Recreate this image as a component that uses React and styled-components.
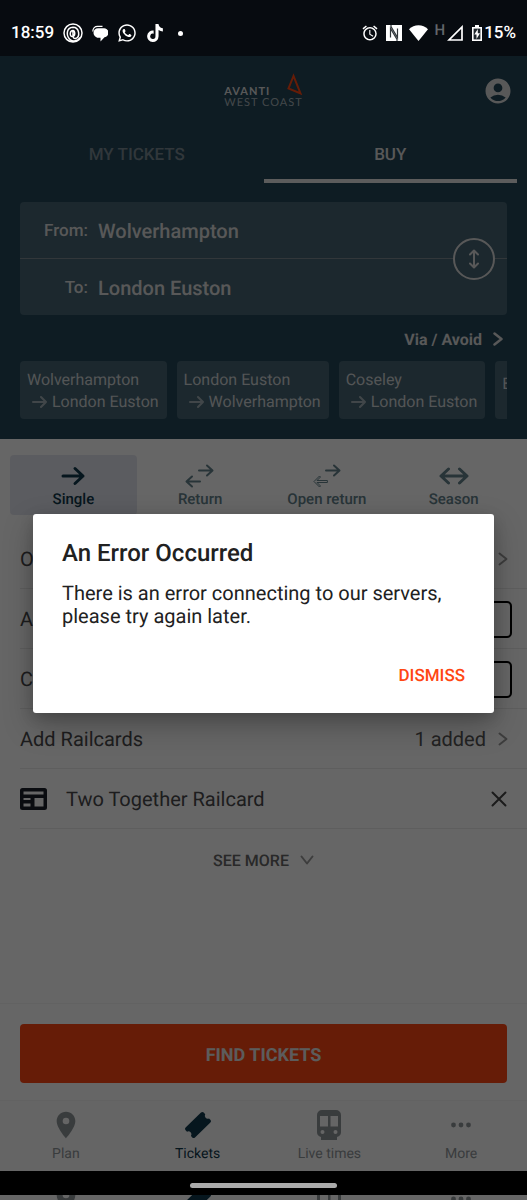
import styled, { createGlobalStyle, css } from "styled-components"
import { FaTiktok, FaWhatsapp } from "react-icons/fa"
import { MdAccountCircle, MdAlarm, MdLocationOn } from "react-icons/md"

const GlobalStyle = createGlobalStyle`
    * {
        box-sizing: border-box;
    }
    body {
        margin: 0;
        font-family: Roboto, "Liberation Sans", sans-serif;
        text-rendering: geometricPrecision;
        background-color: #666;
    }
    button, input {
        font-family: inherit;
        text-rendering: inherit;
    }
    svg {
        display: block;
        flex-shrink: 0;
    }
`

const Page = styled.div`
    position: relative;
    min-height: 100vh;
    display: flex;
    flex-direction: column;
    background-color: #fff;
`

/* status bar */
const StatusBar = styled.div`
    position: relative;
    z-index: 2;
    height: 56px;
    padding: 10px 11px 0;
    display: flex;
    align-items: center;
    justify-content: space-between;
    background-color: #070b10;
    color: #fff;
    font-size: 17px;
    font-weight: 500;
`
const StatusGroup = styled.div`
    display: flex;
    align-items: center;
    gap: ${props => props.$gap}px;
`
const Dot = styled.span`
    width: 5px;
    height: 5px;
    margin-left: 5px;
    border-radius: 50%;
    background-color: #fff;
`
const Network = styled.span`
    align-self: flex-start;
    margin-top: -2px;
    font-size: 15px;
    line-height: 14px;
    color: #62666a;
`
const Signal = styled.div`
    display: flex;
    align-items: center;
    gap: 2px;
`
const Battery = styled.div`
    display: flex;
    align-items: center;
    gap: 2px;
    margin-left: 2px;
`

/* header */
const Header = styled.header`
    background-color: #234658;
    color: #fff;
    padding-bottom: 20px;
`
const Brand = styled.div`
    height: 69px;
    padding: 0 14px;
    display: grid;
    grid-template-columns: 1fr auto 1fr;
    align-items: center;
`
const Logo = styled.div`
    grid-column: 2;
    font-family: Lato, "Liberation Sans", sans-serif;
    font-size: 11px;
    line-height: 11px;
    letter-spacing: 1px;
    color: #ddd;
`
const LogoTop = styled.div`
    display: flex;
    justify-content: space-between;
    align-items: flex-end;
    font-weight: 700;
`
const LogoBottom = styled.div`
    font-weight: 400;
    color: #a9b4ba;
`
const Account = styled.button`
    justify-self: end;
    padding: 0;
    border: 0;
    background: none;
    color: #ddd;
    font-size: 30px;
`
const Tabs = styled.nav`
    display: flex;
    padding: 0 10px;
`
const Tab = styled.button`
    flex: 1;
    height: 58px;
    padding: 6px 0 0;
    border: 0;
    border-bottom: 4px solid ${props => props.$active ? "#e6e6e6" : "transparent"};
    background: none;
    color: ${props => props.$active ? "#dcdcdc" : "#7a8a93"};
    font-size: 17px;
    font-weight: 500;
`
const Journey = styled.div`
    position: relative;
    margin: 19px 20px 0;
    border-radius: 4px;
    background-color: #466473;
`
const Station = styled.div`
    height: 56px;
    padding-top: 2px;
    display: flex;
    align-items: center;
    gap: 10px;
    font-size: 20px;
    font-weight: 500;
    color: #dcdcdc;
    & + & {
        height: 57px;
        border-top: 1px solid #7d8a91;
    }
`
const StationLabel = styled.span`
    width: 68px;
    text-align: right;
    font-size: 17px;
`
const Swap = styled.button`
    position: absolute;
    right: 12px;
    top: 50%;
    width: 42px;
    height: 42px;
    margin-top: -21px;
    padding: 0;
    display: flex;
    align-items: center;
    justify-content: center;
    border: 2px solid #dcdcdc;
    border-radius: 50%;
    background-color: #466473;
    color: #dcdcdc;
`
const Via = styled.a`
    height: 46px;
    padding: 2px 24px 0;
    display: flex;
    align-items: center;
    justify-content: flex-end;
    gap: 11px;
    color: #dcdcdc;
    font-size: 16px;
    font-weight: 700;
    text-decoration: none;
`
const Recents = styled.div`
    display: flex;
    gap: 10px;
    margin: 0 20px;
    overflow: hidden;
`
const Recent = styled.button`
    flex-shrink: 0;
    height: 58px;
    padding: 1px 8px 0 7px;
    border: 0;
    border-radius: 4px;
    background-color: #466473;
    color: #d0d4d6;
    font-size: 16px;
    line-height: 22px;
    text-align: left;
`
const RecentTo = styled.span`
    display: flex;
    align-items: center;
    gap: 5px;
    padding-left: 5px;
    svg {
        color: #a4b0b6;
    }
`

/* search form */
const Kinds = styled.div`
    display: flex;
    padding: 16px 10px 14px;
`
const Kind = styled.button`
    flex: 1;
    height: 60px;
    padding: 7px 0 0;
    display: flex;
    flex-direction: column;
    align-items: center;
    justify-content: flex-start;
    border: 0;
    border-radius: 4px;
    background: ${props => props.$active ? "#e4e7ef" : "none"};
    color: ${props => props.$active ? "#10384c" : "#64828c"};
    font-size: 15px;
    font-weight: 500;
    line-height: 18px;
`
const row = css`
    height: 60px;
    margin-left: 20px;
    padding-right: 19px;
    display: flex;
    align-items: center;
    border-bottom: 1px solid #ebebeb;
    font-size: 20px;
    color: #4a4a4c;
`
const Row = styled.div`
    ${row}
    padding-top: 1px;
    ${props => props.$boxed && "padding-right: 15px;"}
`
const RowLink = styled.a`
    ${row}
    padding-top: 1px;
    text-decoration: none;
`
const RowLabel = styled.label`
    flex: 1;
`
const RowText = styled.span`
    flex: 1;
`
const Added = styled.span`
    margin-right: 12px;
    color: #555;
`
const Chevron = styled.span`
    color: #999;
`
const Count = styled.input`
    width: 52px;
    height: 37px;
    padding: 0 8px;
    border: 2px solid #000;
    border-radius: 5px;
    background: none;
    font-size: 20px;
`
const Railcard = styled.span`
    flex: 1;
    margin-left: 19px;
`
const Remove = styled.button`
    padding: 0;
    border: 0;
    background: none;
    color: #444;
`
const SeeMore = styled.button`
    width: 100%;
    height: 62px;
    padding: 0;
    display: flex;
    align-items: center;
    justify-content: center;
    gap: 11px;
    border: 0;
    background: none;
    color: #666;
    font-size: 16px;
    font-weight: 500;
    svg {
        color: #999;
    }
`
const Content = styled.main`
    flex: 1;
`
const Action = styled.div`
    padding: 20px 20px 17px;
    border-top: 1px solid #f4f4f4;
`
const Find = styled.button`
    width: 100%;
    height: 59px;
    padding: 3px 0 0;
    border: 0;
    border-radius: 4px;
    background-color: #ff4713;
    color: #e6e6e6;
    font-size: 18px;
    font-weight: 700;
`

/* bottom bar */
const BottomNav = styled.nav`
    display: flex;
    height: 71px;
    border-top: 1px solid #f6f6f6;
    background-color: #fcfcfc;
`
const NavItem = styled.a`
    flex: 1;
    display: flex;
    flex-direction: column;
    align-items: center;
    padding: 8px 0 0;
    color: ${props => props.$active ? "#10384c" : "#90969a"};
    font-size: 14px;
    line-height: 26px;
    text-decoration: none;
`
const NavIcon = styled.span`
    height: 32px;
    display: flex;
    align-items: center;
`
const SystemBar = styled.div`
    position: relative;
    z-index: 2;
    height: 24px;
    padding-top: 5px;
    display: flex;
    align-items: center;
    justify-content: center;
    background-color: #000;
`
const Pill = styled.div`
    width: 28%;
    height: 5px;
    border-radius: 3px;
    background-color: #aaa;
`
const Underlay = styled.div`
    height: 5px;
    overflow: hidden;
    display: flex;
    align-items: flex-start;
`
const UnderlayIcon = styled.span`
    flex: 1;
    display: flex;
    justify-content: center;
    height: 32px;
    align-items: center;
    margin-top: -12px;
    color: ${props => props.$active ? "#10384c" : "#90969a"};
`

/* dialog */
const Backdrop = styled.div`
    position: absolute;
    inset: 0;
    z-index: 1;
    padding: 56px 33px 29px;
    display: flex;
    align-items: center;
    background-color: rgba(0, 0, 0, 0.6);
`
const Dialog = styled.div`
    flex: 1;
    padding: 25px 29px 22px;
    border-radius: 3px;
    background-color: #fff;
    color: #212121;
    box-shadow: 0 12px 30px rgba(0, 0, 0, 0.25), 0 4px 14px rgba(0, 0, 0, 0.15);
`
const DialogTitle = styled.h2`
    margin: 0 0 14px;
    font-size: 24px;
    line-height: 29px;
    font-weight: 500;
`
const DialogText = styled.p`
    margin: 0 0 33px;
    font-size: 20px;
    line-height: 23px;
`
const DialogActions = styled.div`
    display: flex;
    justify-content: flex-end;
`
const Dismiss = styled.button`
    padding: 5px 0;
    border: 0;
    background: none;
    color: #ff4713;
    font-size: 17px;
    line-height: 20px;
    font-weight: 500;
`

const Stroke = ({ w, h, width = 2, d, children }) => (
    <svg width={w} height={h} viewBox={`0 0 ${w} ${h}`} fill="none" stroke="currentColor" strokeWidth={width} strokeLinecap="round" strokeLinejoin="round">
        <path d={d} />
        {children}
    </svg>
)

const ThreadsIcon = () => (
    <Stroke w={20} h={20} width={1.5} d="M10 1a9 9 0 1 0 0 18a9 9 0 1 0 0-18M7 16.500C3 13 3 4.500 10 4.200c6.500 0 7.500 10 2.500 11.300-3 .5-2.500-3-2.500-8M10 7.500c-3.500 0-3.500 6-.8 6 3.500 0 3-6 .8-6M7 16.500c3 2.500 8 1.500 9.500-1.500" />
)

const ChatIcon = () => (
    <svg width="16" height="17" viewBox="0 0 16 17" fill="currentColor">
        <path d="M6 3.200h5.500a4.500 4.500 0 0 1 1 9L8.500 16.500v-3.700H6C4 12.500 1.500 10.500 1.500 7.700a4.500 4.500 0 0 1 4.500-4.500z" />
        <path d="M.8 6.500C.8 3 3 1.300 5.500 1.300h5" fill="none" stroke="currentColor" strokeWidth="1.200" />
    </svg>
)

const NfcIcon = () => (
    <svg width="16" height="16" viewBox="0 0 16 16">
        <path d="M0 0h16v16H0z" fill="#fff" />
        <path d="M5 0v1.500l6.500 11V3.500M11 16v-1.500L4.500 3.500v9" fill="none" stroke="#30363a" strokeWidth="1.200" />
    </svg>
)

const WifiIcon = () => (
    <svg width="19" height="16" viewBox="0 0 19 16" fill="currentColor">
        <path d="M9.500 16L0 4.300C5-1.200 14-1.200 19 4.300z" />
    </svg>
)

const SignalIcon = () => (
    <svg width="16" height="16" viewBox="0 0 16 16" fill="none" stroke="currentColor" strokeWidth="1.700">
        <path d="M15 2v13H2z" />
    </svg>
)

const BatteryIcon = () => (
    <svg width="10" height="16" viewBox="0 0 10 16">
        <path d="M3 0h4v2h3v14H0V2h3z" fill="#fff" />
        <path d="M1.600 3.600h6.800v10.800H1.600z" fill="#20272c" />
        <path d="M5.800 4L2.300 9.500h2.200V14L8 8.300H5.800z" fill="#fff" />
    </svg>
)

const LogoMark = () => (
    <svg width="16" height="24" viewBox="0 0 16 24" fill="none" stroke="#ff4713" strokeWidth="2">
        <path d="M6.500 3L1.500 15.500L13.500 20.500z" />
    </svg>
)

const SingleIcon = () => <Stroke w={30} h={28} width={3} d="M5 14h20M17 6.500l8 7.500-8 7.500" />
const ReturnIcon = () => <Stroke w={30} h={28} d="M14 8.500h13M22 3.500l5.500 5-5.500 5M15 19.500H2M7 14.500l-5.500 5 5.500 5" />
const OpenReturnIcon = () => (
    <Stroke w={30} h={28} d="M14 8.500h13M22 3.500l5.500 5-5.500 5">
        <path d="M15 18.500H5l3.500-3.500-1-1L2 19.500l5.500 5.500 1-1L5 20.500h10z" strokeWidth="1" />
    </Stroke>
)
const SeasonIcon = () => <Stroke w={30} h={28} width={3} d="M2.500 14h25M9.500 7l-7.500 7 7.500 7M20.500 7l7.500 7-7.500 7" />
const ArrowIcon = () => <Stroke w={15} h={14} width={2} d="M1 7h13M9 2l5 5-5 5" />
const ChevronRight = ({ width }) => <Stroke w={10} h={14} width={width} d="M1.500 1.500l7 5.500-7 5.500" />

const RailcardIcon = () => (
    <svg width="27" height="22" viewBox="0 0 27 22">
        <path d="M2.500 0h22A2.500 2.500 0 0 1 27 2.500v17a2.500 2.500 0 0 1-2.500 2.500h-22A2.500 2.500 0 0 1 0 19.500v-17A2.500 2.500 0 0 1 2.500 0zM3.500 3.500v3h20v-3zM3.500 10v2h7v-2zM3.500 15.500v3h7v-3zM14.500 10v8.500h9V10z" fill="#1b1f28" fillRule="evenodd" />
    </svg>
)

const TicketIcon = () => (
    <svg width="28" height="28" viewBox="0 0 28 28" fill="currentColor">
        <path d="M17 1.500q1.500-1.200 2.700.1l1.500 1.600a3 3 0 0 0 3.800 4.200l1.600 1.500q1 1.300-.2 2.600L11 26.500q-1.500 1.200-2.700-.1L7 25a3 3 0 0 0-4-4.200L1.400 19q-1-1.300.2-2.600z" />
    </svg>
)

const TrainIcon = () => (
    <svg width="24" height="30" viewBox="0 0 24 30" fill="currentColor">
        <path d="M5 0h14a5 5 0 0 1 5 5v17a5 5 0 0 1-4 5v3H4v-3a5 5 0 0 1-4-5V5a5 5 0 0 1 5-5zM3 6v10.500h8V6zM13.500 6v10.500H21V6zM5.500 20a2 2 0 1 0 0 4 2 2 0 0 0 0-4zM18.500 20a2 2 0 1 0 0 4 2 2 0 0 0 0-4z" fillRule="evenodd" />
    </svg>
)

const MoreIcon = () => (
    <svg width="20" height="6" viewBox="0 0 20 6" fill="currentColor">
        <circle cx="2.500" cy="3" r="2.400" />
        <circle cx="10" cy="3" r="2.400" />
        <circle cx="17.500" cy="3" r="2.400" />
    </svg>
)

const recents = [
    ["Wolverhampton", "London Euston"],
    ["London Euston", "Wolverhampton"],
    ["Coseley", "London Euston"],
    ["E", ""],
]

const kinds = [
    { name: "Single", icon: <SingleIcon />, active: true },
    { name: "Return", icon: <ReturnIcon /> },
    { name: "Open return", icon: <OpenReturnIcon /> },
    { name: "Season", icon: <SeasonIcon /> },
]

const navItems = [
    { name: "Plan", icon: <MdLocationOn size={32} /> },
    { name: "Tickets", icon: <TicketIcon />, active: true },
    { name: "Live times", icon: <TrainIcon /> },
    { name: "More", icon: <MoreIcon /> },
]

const App = () => {
  return (
    <Page>
        <GlobalStyle />
        <StatusBar>
            <StatusGroup $gap={9}>
                18:59
                <ThreadsIcon />
                <ChatIcon />
                <FaWhatsapp size={20} />
                <FaTiktok size={18} />
                <Dot />
            </StatusGroup>
            <StatusGroup $gap={7}>
                <MdAlarm size={18} />
                <NfcIcon />
                <WifiIcon />
                <Signal>
                    <Network>H</Network>
                    <SignalIcon />
                </Signal>
                <Battery>
                    <BatteryIcon />
                    15%
                </Battery>
            </StatusGroup>
        </StatusBar>
        <Header>
            <Brand>
                <Logo>
                    <LogoTop>AVANTI <LogoMark /></LogoTop>
                    <LogoBottom>WEST COAST</LogoBottom>
                </Logo>
                <Account aria-label="Account"><MdAccountCircle /></Account>
            </Brand>
            <Tabs>
                <Tab>MY TICKETS</Tab>
                <Tab $active>BUY</Tab>
            </Tabs>
            <Journey>
                <Station><StationLabel>From:</StationLabel>Wolverhampton</Station>
                <Station><StationLabel>To:</StationLabel>London Euston</Station>
                <Swap aria-label="Swap stations">
                    <Stroke w={12} h={20} d="M6 2v16M2 5.500l4-4 4 4M2 14.500l4 4 4-4" />
                </Swap>
            </Journey>
            <Via href="#">Via / Avoid <ChevronRight width={2.5} /></Via>
            <Recents>
                {recents.map(([from, to]) => (
                    <Recent key={from + to}>
                        {from}
                        <RecentTo><ArrowIcon />{to}</RecentTo>
                    </Recent>
                ))}
            </Recents>
        </Header>
        <Content>
            <Kinds>
                {kinds.map(kind => (
                    <Kind key={kind.name} $active={kind.active}>
                        {kind.icon}
                        {kind.name}
                    </Kind>
                ))}
            </Kinds>
            <RowLink href="#">
                <RowText>O</RowText>
                <Chevron><ChevronRight /></Chevron>
            </RowLink>
            <Row $boxed>
                <RowLabel htmlFor="adults">A</RowLabel>
                <Count id="adults" />
            </Row>
            <Row $boxed>
                <RowLabel htmlFor="children">C</RowLabel>
                <Count id="children" />
            </Row>
            <RowLink href="#">
                <RowText>Add Railcards</RowText>
                <Added>1 added</Added>
                <Chevron><ChevronRight /></Chevron>
            </RowLink>
            <Row>
                <RailcardIcon />
                <Railcard>Two Together Railcard</Railcard>
                <Remove aria-label="Remove railcard">
                    <Stroke w={18} h={18} d="M2.500 2.500l13 13M15.500 2.500l-13 13" />
                </Remove>
            </Row>
            <SeeMore>
                SEE MORE
                <Stroke w={14} h={10} d="M1.500 1.500l5.500 7 5.500-7" />
            </SeeMore>
        </Content>
        <Action>
            <Find>FIND TICKETS</Find>
        </Action>
        <BottomNav>
            {navItems.map(item => (
                <NavItem key={item.name} href="#" $active={item.active}>
                    <NavIcon>{item.icon}</NavIcon>
                    {item.name}
                </NavItem>
            ))}
        </BottomNav>
        <SystemBar><Pill /></SystemBar>
        <Underlay aria-hidden="true">
            {navItems.map(item => (
                <UnderlayIcon key={item.name} $active={item.active}>{item.icon}</UnderlayIcon>
            ))}
        </Underlay>
        <Backdrop>
            <Dialog role="alertdialog" aria-labelledby="error-title" aria-describedby="error-text">
                <DialogTitle id="error-title">An Error Occurred</DialogTitle>
                <DialogText id="error-text">There is an error connecting to our servers, please try again later.</DialogText>
                <DialogActions>
                    <Dismiss>DISMISS</Dismiss>
                </DialogActions>
            </Dialog>
        </Backdrop>
    </Page>
  )
}

export default App
